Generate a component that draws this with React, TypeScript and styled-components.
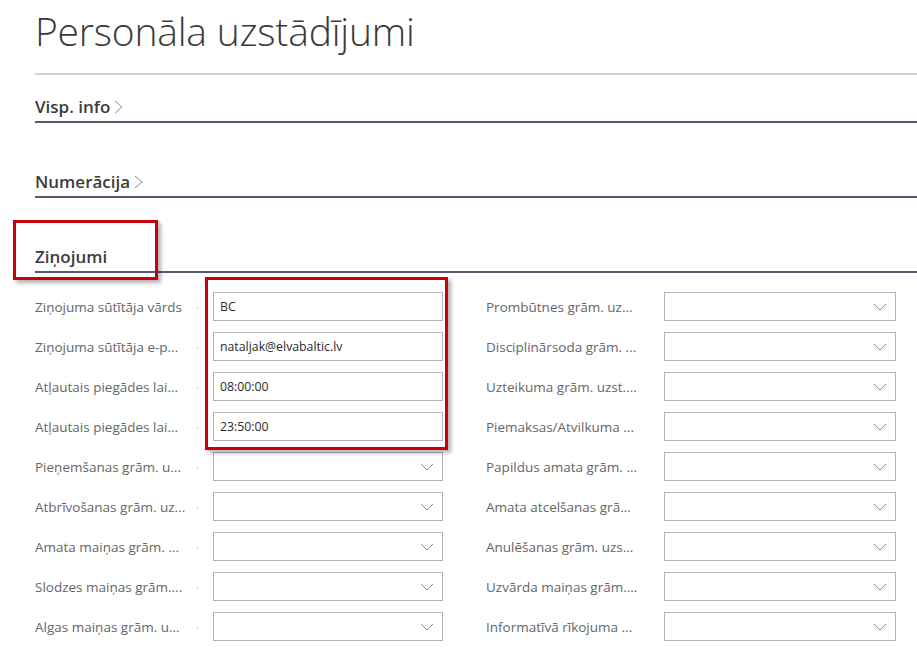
import React from "react";
import styled, { createGlobalStyle } from "styled-components";

const GlobalStyle = createGlobalStyle`
  html, body { margin: 0; padding: 0; background: #ffffff; }
  body { font-family: "Open Sans", "Noto Sans", "Liberation Sans", sans-serif; color: #333333; }
`;

const Page = styled.div`
  position: relative;
  width: 917px;
  height: 660px;
  overflow: hidden;
  padding-left: 35px;
  box-sizing: border-box;
`;

const Title = styled.h1`
  margin: 0;
  padding-top: 6px;
  font-size: 39px;
  line-height: 50px;
  font-weight: 300;
  color: #3a3a3a;
  letter-spacing: -0.2px;
`;

const Divider = styled.div`
  margin-top: 17px;
  height: 2px;
  background: #d2d2d2;
`;

const Section = styled.section<{ $first?: boolean }>`
  margin-top: ${(p) => (p.$first ? "21px" : "48px")};
`;

const SectionHeader = styled.div`
  display: flex;
  align-items: center;
  height: 20px;
  padding-bottom: 5px;
  border-bottom: 2px solid #505c6d;
  font-size: 17px;
  font-weight: 600;
  color: #3c3c3c;
`;

const ChevronWrap = styled.span`
  display: inline-flex;
  margin-left: 4px;
  margin-top: 1px;
`;

const FieldGrid = styled.div`
  margin-top: 19px;
  display: grid;
  grid-template-columns: 408px 410px;
  column-gap: 43px;
  row-gap: 11px;
  grid-auto-flow: column;
  grid-template-rows: repeat(9, 29px);
`;

const Field = styled.div`
  display: flex;
  align-items: center;
  height: 29px;
`;

const LabelCell = styled.div`
  width: 178px;
  flex: none;
  display: flex;
  align-items: center;
  font-size: 13.5px;
  color: #666666;
  white-space: nowrap;
`;

const LabelText = styled.span`
  flex: 1;
  overflow: hidden;
`;

const Dot = styled.span`
  width: 4px;
  margin-right: 13px;
  color: #c4c4c4;
  font-size: 10px;
`;

const InputBox = styled.div<{ $wide?: boolean }>`
  box-sizing: border-box;
  width: ${(p) => (p.$wide ? "232px" : "230px")};
  height: 29px;
  border: 1px solid #b4b4b4;
  display: flex;
  align-items: center;
  justify-content: space-between;
  padding: 0 8px 0 6px;
  font-size: 12.3px;
  color: #2b2b2b;
  background: #fff;
`;

const Highlight = styled.div`
  position: absolute;
  border: 3px solid #c8000a;
  box-shadow: 3px 3px 4px rgba(0, 0, 0, 0.3);
  box-sizing: border-box;
  pointer-events: none;
`;

const ChevronRight = () => (
  <ChevronWrap>
    <svg width="9" height="14" viewBox="0 0 9 14">
      <polyline points="1,1 8,7 1,13" fill="none" stroke="#8a8a8a" strokeWidth="1" />
    </svg>
  </ChevronWrap>
);

const ChevronDown = () => (
  <svg width="14" height="8" viewBox="0 0 14 8">
    <polyline points="1,1 7,7 13,1" fill="none" stroke="#8a8a8a" strokeWidth="1" />
  </svg>
);

type F = { label: string; value?: string; select?: boolean };

const left: F[] = [
  { label: "Ziņojuma sūtītāja vārds", value: "BC" },
  { label: "Ziņojuma sūtītāja e-p...", value: "nataljak@elvabaltic.lv" },
  { label: "Atļautais piegādes lai...", value: "08:00:00" },
  { label: "Atļautais piegādes lai...", value: "23:50:00" },
  { label: "Pieņemšanas grām. u...", select: true },
  { label: "Atbrīvošanas grām. uz...", select: true },
  { label: "Amata maiņas grām. ...", select: true },
  { label: "Slodzes maiņas grām....", select: true },
  { label: "Algas maiņas grām. u...", select: true },
];

const right: F[] = [
  { label: "Prombūtnes grām. uz..." },
  { label: "Disciplinārsoda grām. ..." },
  { label: "Uzteikuma grām. uzst...." },
  { label: "Piemaksas/Atvilkuma ..." },
  { label: "Papildus amata grām. ..." },
  { label: "Amata atcelšanas grā..." },
  { label: "Anulēšanas grām. uzs..." },
  { label: "Uzvārda maiņas grām...." },
  { label: "Informatīvā rīkojuma ..." },
];

export default function App() {
  return (
    <>
      <GlobalStyle />
      <Page>
        <Title>Personāla uzstādījumi</Title>
        <Divider />
        <Section $first>
          <SectionHeader>
            Visp. info
            <ChevronRight />
          </SectionHeader>
        </Section>
        <Section>
          <SectionHeader>
            Numerācija
            <ChevronRight />
          </SectionHeader>
        </Section>
        <Section>
          <SectionHeader>Ziņojumi</SectionHeader>
          <FieldGrid>
            {left.map((f, i) => (
              <Field key={"l" + i}>
                <LabelCell>
                  <LabelText>{f.label}</LabelText>
                  <Dot>·</Dot>
                </LabelCell>
                <InputBox>
                  <span>{f.value}</span>
                  {f.select && <ChevronDown />}
                </InputBox>
              </Field>
            ))}
            {right.map((f, i) => (
              <Field key={"r" + i}>
                <LabelCell>
                  <LabelText>{f.label}</LabelText>
                </LabelCell>
                <InputBox $wide>
                  <span />
                  <ChevronDown />
                </InputBox>
              </Field>
            ))}
          </FieldGrid>
        </Section>
        <Highlight style={{ left: 13, top: 220, width: 145, height: 60 }} />
        <Highlight style={{ left: 205, top: 277, width: 243, height: 173 }} />
      </Page>
    </>
  );
}
